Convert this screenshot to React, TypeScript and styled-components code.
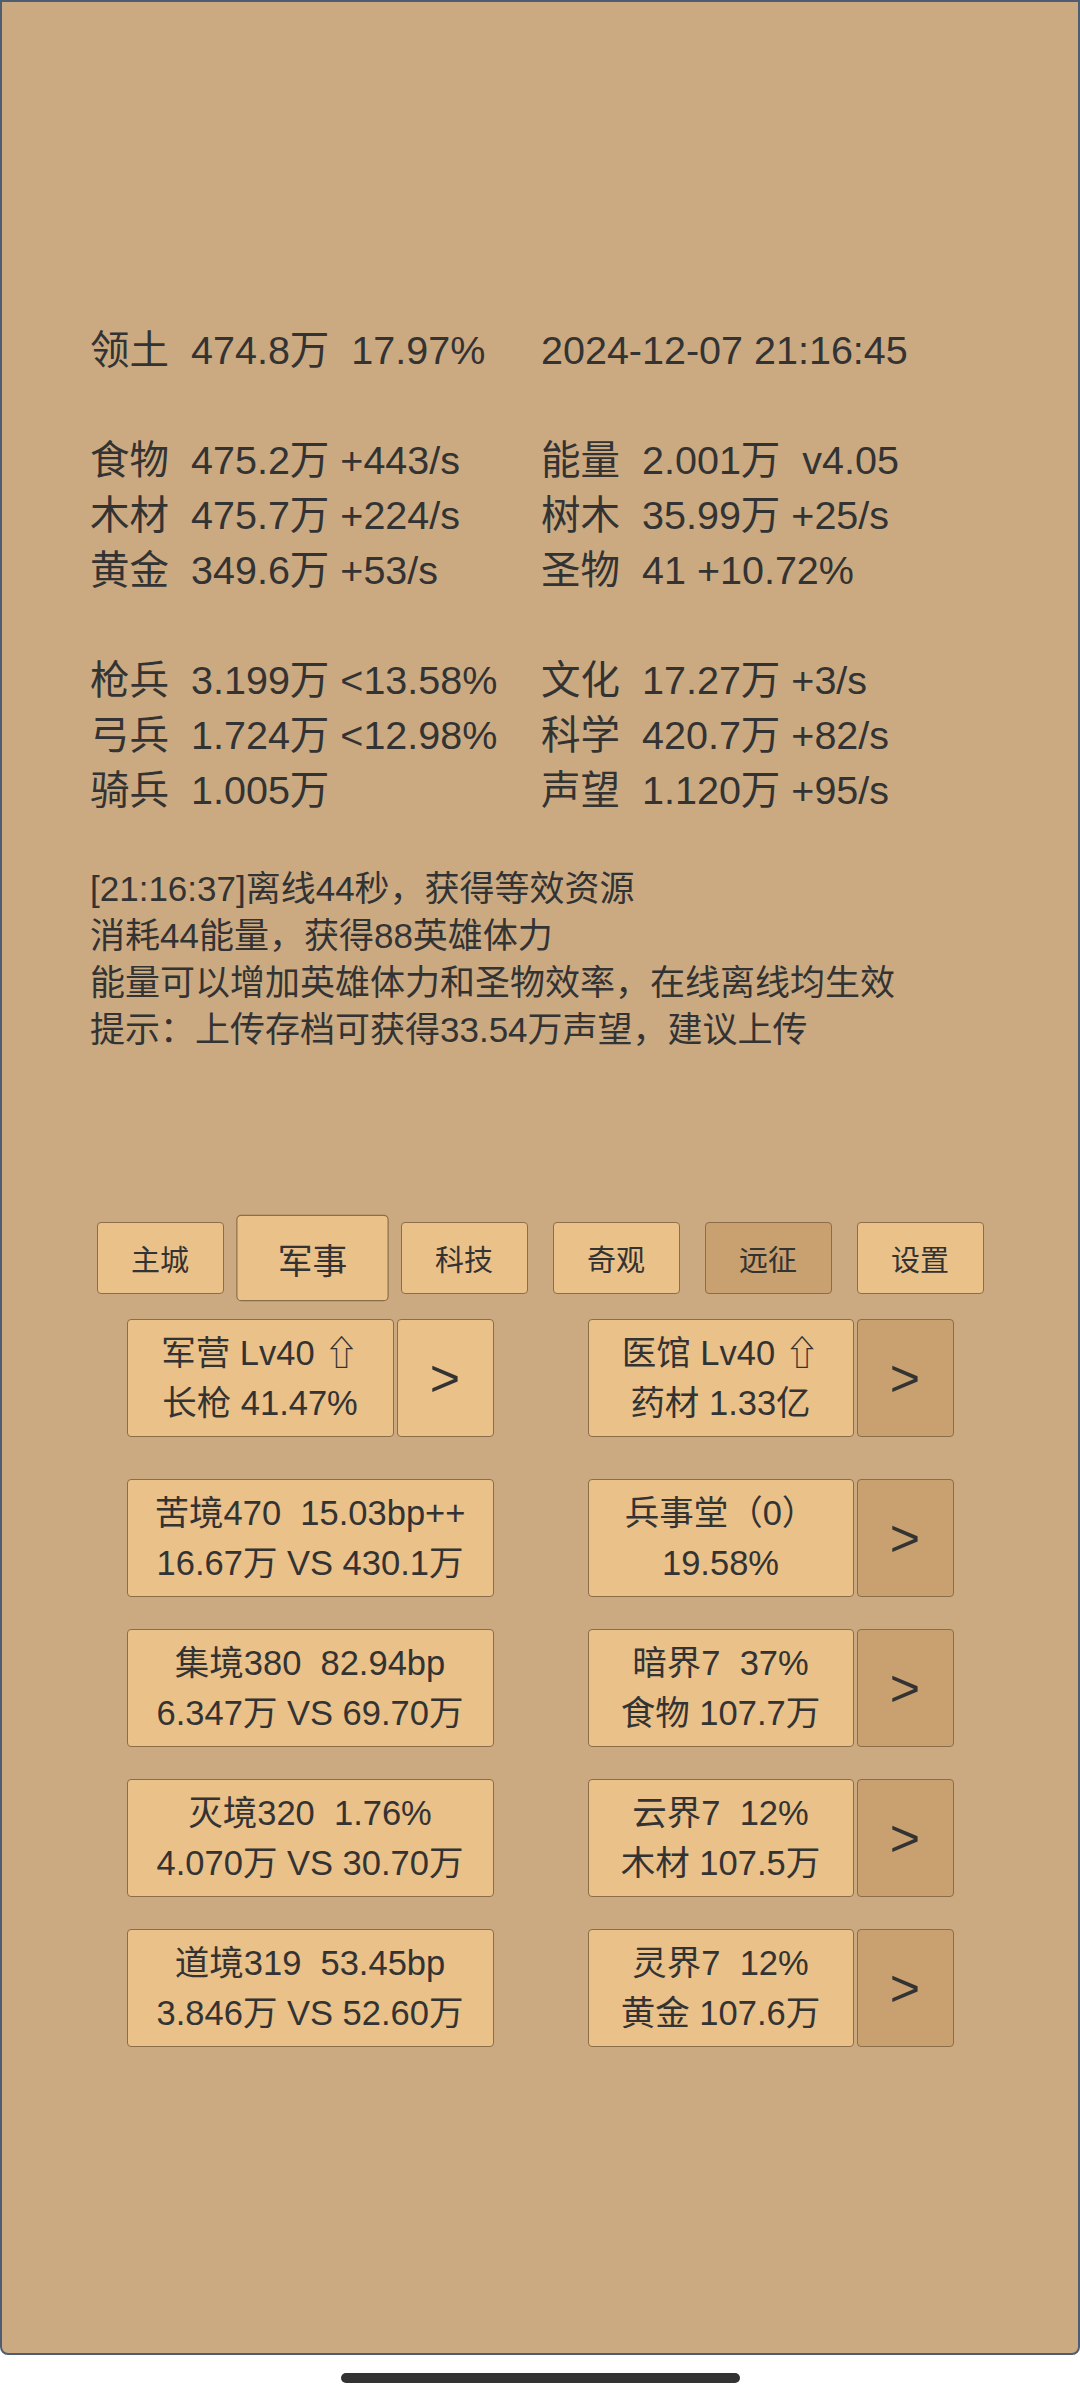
import React from 'react';
import styled, { createGlobalStyle } from 'styled-components';

const GlobalStyle = createGlobalStyle`
    html, body {
        margin: 0;
        padding: 0;
        background: #ffffff;
    }
    body {
        font-family: "Liberation Sans", "Noto Sans CJK SC", sans-serif;
        color: #333333;
    }
`;

type Stat = { label?: string; value: string };

const statLines: (Stat[] | null)[] = [
    [{ label: '领土', value: '474.8万  17.97%' }, { value: '2024-12-07 21:16:45' }],
    null,
    [{ label: '食物', value: '475.2万 +443/s' }, { label: '能量', value: '2.001万  v4.05' }],
    [{ label: '木材', value: '475.7万 +224/s' }, { label: '树木', value: '35.99万 +25/s' }],
    [{ label: '黄金', value: '349.6万 +53/s' }, { label: '圣物', value: '41 +10.72%' }],
    null,
    [{ label: '枪兵', value: '3.199万 <13.58%' }, { label: '文化', value: '17.27万 +3/s' }],
    [{ label: '弓兵', value: '1.724万 <12.98%' }, { label: '科学', value: '420.7万 +82/s' }],
    [{ label: '骑兵', value: '1.005万' }, { label: '声望', value: '1.120万 +95/s' }],
];

const messages = [
    '[21:16:37]离线44秒，获得等效资源',
    '消耗44能量，获得88英雄体力',
    '能量可以增加英雄体力和圣物效率，在线离线均生效',
    '提示：上传存档可获得33.54万声望，建议上传',
];

const tabs = ['主城', '军事', '科技', '奇观', '远征', '设置'];

type Card = { lines: [string, string]; arrow?: 'light' | 'dark' };

const buildingRows: [Card, Card][] = [
    [
        { lines: ['军营 Lv40 ⇧', '长枪 41.47%'], arrow: 'light' },
        { lines: ['医馆 Lv40 ⇧', '药材 1.33亿'], arrow: 'dark' },
    ],
    [
        { lines: ['苦境470  15.03bp++', '16.67万 VS 430.1万'] },
        { lines: ['兵事堂（0）', '19.58%'], arrow: 'dark' },
    ],
    [
        { lines: ['集境380  82.94bp', '6.347万 VS 69.70万'] },
        { lines: ['暗界7  37%', '食物 107.7万'], arrow: 'dark' },
    ],
    [
        { lines: ['灭境320  1.76%', '4.070万 VS 30.70万'] },
        { lines: ['云界7  12%', '木材 107.5万'], arrow: 'dark' },
    ],
    [
        { lines: ['道境319  53.45bp', '3.846万 VS 52.60万'] },
        { lines: ['灵界7  12%', '黄金 107.6万'], arrow: 'dark' },
    ],
];

function App() {
    return (
        <>
            <GlobalStyle />
            <Panel>
                <StatsGrid>
                    {statLines.map((line, i) =>
                        line ? (
                            line.map((s, j) => (
                                <StatCell key={`${i}-${j}`}>
                                    {s.label && <StatLabel>{s.label}</StatLabel>}
                                    <span>{s.value}</span>
                                </StatCell>
                            ))
                        ) : (
                            <BlankLine key={i} />
                        )
                    )}
                </StatsGrid>

                <MessageBox>
                    {messages.map((m, i) => (
                        <div key={i}>{m}</div>
                    ))}
                </MessageBox>

                <TabBar>
                    {tabs.map((t, i) => (
                        <Tab key={t} $active={i === 1} $dark={i === 4}>
                            {t}
                        </Tab>
                    ))}
                </TabBar>

                <BuildingList>
                    {buildingRows.map((row, i) => (
                        <BuildingRow key={i} $first={i === 0}>
                            {row.map((card, j) => (
                                <CardWrap key={j}>
                                    <InfoBox>
                                        <div>{card.lines[0]}</div>
                                        <div>{card.lines[1]}</div>
                                    </InfoBox>
                                    {card.arrow && (
                                        <ArrowButton $dark={card.arrow === 'dark'}>&gt;</ArrowButton>
                                    )}
                                </CardWrap>
                            ))}
                        </BuildingRow>
                    ))}
                </BuildingList>
            </Panel>
            <Footer>
                <HomeBar />
            </Footer>
        </>
    );
}

export default App;

const light = '#eac189';
const dark = '#c9a06f';
const edge = '#8c6d4a';

const Panel = styled.div`
    box-sizing: border-box;
    height: 2355px;
    background: #cbaa82;
    border: 2px solid #4e5d72;
    border-radius: 0 0 8px 8px;
    display: flex;
    flex-direction: column;
    padding-top: 321px;
`;

const StatsGrid = styled.div`
    display: grid;
    grid-template-columns: 451px auto;
    padding-left: 88px;
    font-size: 39.5px;
    line-height: 55px;
`;

const StatCell = styled.div`
    display: flex;
    white-space: pre;
`;

const StatLabel = styled.span`
    width: 101px;
    flex: none;
`;

const BlankLine = styled.div`
    grid-column: 1 / -1;
    height: 55px;
`;

const MessageBox = styled.div`
    margin-top: 47px;
    padding-left: 88px;
    font-size: 35px;
    line-height: 47px;
`;

const TabBar = styled.div`
    margin-top: 169px;
    display: flex;
    justify-content: center;
    gap: 25px;
`;

const Tab = styled.div<{ $active?: boolean; $dark?: boolean }>`
    box-sizing: border-box;
    width: 127px;
    height: 72px;
    display: flex;
    align-items: center;
    justify-content: center;
    background: ${(p) => (p.$dark ? dark : light)};
    border: 1px solid ${edge};
    border-radius: 4px;
    font-size: 29px;
    transform: ${(p) => (p.$active ? 'scale(1.2)' : 'none')};
`;

const BuildingList = styled.div`
    margin-top: 25px;
    display: flex;
    flex-direction: column;
    gap: 32px;
`;

const BuildingRow = styled.div<{ $first?: boolean }>`
    display: grid;
    grid-template-columns: 367px 366px;
    column-gap: 94px;
    justify-content: center;
    margin-bottom: ${(p) => (p.$first ? '10px' : '0')};
`;

const CardWrap = styled.div`
    display: flex;
    gap: 3px;
    height: 118px;
`;

const InfoBox = styled.div`
    flex: 1;
    box-sizing: border-box;
    display: flex;
    flex-direction: column;
    align-items: center;
    justify-content: center;
    background: ${light};
    border: 1px solid ${edge};
    border-radius: 4px;
    font-size: 34.5px;
    line-height: 50px;
    white-space: pre;
`;

const ArrowButton = styled.div<{ $dark?: boolean }>`
    box-sizing: border-box;
    width: 97px;
    flex: none;
    display: flex;
    align-items: center;
    justify-content: center;
    background: ${(p) => (p.$dark ? dark : light)};
    border: 1px solid ${edge};
    border-radius: 4px;
    font-size: 52px;
`;

const Footer = styled.div`
    height: 45px;
    display: flex;
    align-items: center;
    justify-content: center;
`;

const HomeBar = styled.div`
    width: 399px;
    height: 10px;
    border-radius: 5px;
    background: #333333;
`;
